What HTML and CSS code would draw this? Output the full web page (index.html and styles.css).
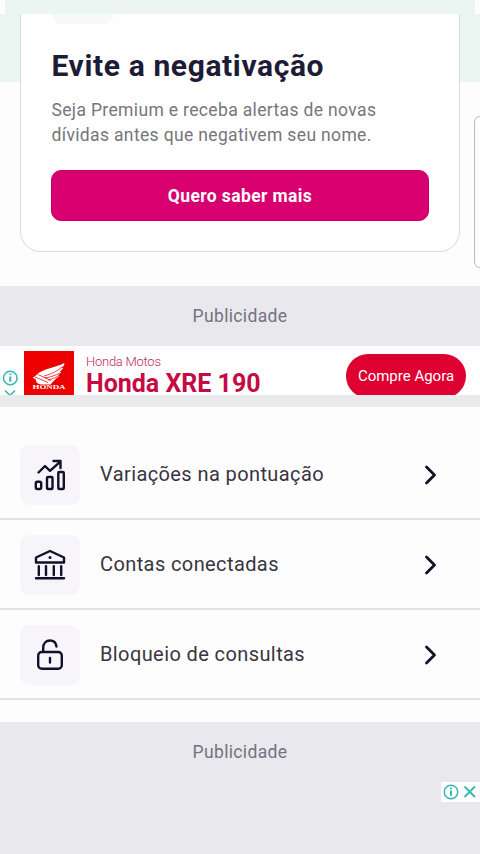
FILE: index.html
```html
<!DOCTYPE html>
<html lang="pt-BR">
<head>
<meta charset="utf-8">
<meta name="viewport" content="width=device-width, initial-scale=1">
<title>Serviços</title>
<link rel="stylesheet" href="styles.css">
</head>
<body>
<main class="screen">
  <section class="carousel">
    <span class="edge edge-left"></span>
    <span class="edge edge-right"></span>
    <article class="card">
      <span class="tag"></span>
      <h1 class="title">Evite a negativação</h1>
      <p class="copy">Seja Premium e receba alertas de novas<br>dívidas antes que negativem seu nome.</p>
      <button class="primary">Quero saber mais</button>
    </article>
    <article class="next-card"></article>
  </section>
  <div class="ad-label">Publicidade</div>
  <section class="banner">
    <div class="ad-options">
      <svg width="18" height="49" viewBox="0 0 18 49" fill="none" stroke="#35b8b4" stroke-width="1.5"><circle cx="10.3" cy="32" r="6.8"/><path d="M10.3 30.5v5.3M10.3 27.4v1.7" stroke-width="2"/><path d="M5 44.5l10 10M15 44.5l-10 10"/></svg>
    </div>
    <div class="logo">
      <svg width="51" height="44" viewBox="0 0 51 44"><path d="M40.5 12C33 16 18 18 13 23.500c-2 2-4 2.500-4 3.500 2 .5 3 1 3 3 1 3 4 3.500 8 3.500h7c1-3 4-4 5-6l3-2-1-1 3-3-1-1 3-3-1-1c2-2 2-2 2.500-4.500Z" fill="#fff"/><path d="M11 26l13 5.500M14 23.500l13 6M20 25c7-2 12-4 18-9M21 27c6-1 11-3 15-5M24 29c4-1 7-2 10-4" fill="none" stroke="#ed0000" stroke-width=".75"/><text x="8.500" y="38" textLength="33" lengthAdjust="spacingAndGlyphs">HONDA</text></svg>
    </div>
    <div class="ad-copy"><span class="brand">Honda Motos</span><strong class="model">Honda XRE 190</strong></div>
    <button class="buy">Compre Agora</button>
  </section>
  <nav class="menu">
    <a class="row">
      <span class="icon"><svg width="40" height="40" viewBox="0 0 40 40"><path d="M8.500 17.500l6.500-6.500 5 4.800 10-9M23.500 6H30.500V13"/><rect x="5.800" y="26.800" width="5.400" height="7.200" rx="1.500"/><rect x="17" y="22" width="5.500" height="12" rx="1"/><rect x="28.300" y="17" width="5.500" height="17" rx="1"/></svg></span>
      <span class="label">Variações na pontuação</span>
      <svg class="chevron" width="20" height="24" viewBox="0 0 20 24"><path d="M6.500 4l8 8-8 8"/></svg>
    </a>
    <a class="row">
      <span class="icon"><svg width="40" height="40" viewBox="0 0 40 40"><path d="M6 17.500v-5L20 6l14 6.500v5ZM8.800 21.200V30M16 21.200V30M23.800 21.200V30M31.200 21.200V30M6 33.300h28"/><circle class="dot" cx="20" cy="12.500" r="1.500"/></svg></span>
      <span class="label">Contas conectadas</span>
      <svg class="chevron" width="20" height="24" viewBox="0 0 20 24"><path d="M6.500 4l8 8-8 8"/></svg>
    </a>
    <a class="row">
      <span class="icon"><svg width="40" height="40" viewBox="0 0 40 40"><rect x="8.200" y="17" width="23.600" height="16.800" rx="3.500"/><path d="M13.200 16.500v-3.500C13.200 8.200 16 5.500 20 5.500c3.800 0 6 2.300 6.500 6M20 23v4.600"/></svg></span>
      <span class="label">Bloqueio de consultas</span>
      <svg class="chevron" width="20" height="24" viewBox="0 0 20 24"><path d="M6.500 4l8 8-8 8"/></svg>
    </a>
  </nav>
  <section class="bottom-ad">
    <div class="ad-label">Publicidade</div>
    <div class="ad-controls"><svg width="39" height="20" viewBox="0 0 39 20" fill="none" stroke="#35b8b4" stroke-width="1.5"><circle cx="10" cy="10" r="6.8"/><path d="M10 8.6v5.2M10 5.5v1.8" stroke-width="2"/><path d="M23.5 4.5l10.5 10.5M34 4.5L23.5 15" stroke-width="1.8"/></svg></div>
  </section>
</main>
</body>
</html>
```
FILE: styles.css
```css
* { box-sizing: border-box; }
body { margin: 0; font-family: Roboto, sans-serif; background: #fefdfe; }
.screen { width: 480px; height: 854px; overflow: hidden; background: #fefdfe; }
button { border: 0; padding: 0; font-family: inherit; color: #fff; }
.carousel { position: relative; display: flex; gap: 14px; height: 286px; padding: 14px 0 0 20px; overflow: hidden; background: linear-gradient(#ebf5f2 0 82px, #fefdfe 82px); }
.edge { position: absolute; top: 0; width: 5px; height: 14px; background: #fcfefd; }
.edge-left { left: 0; }
.edge-right { right: 0; }
.card { flex: none; width: 440px; height: 238px; padding: 0 31px 0 30.5px; border: 1px solid #dcd9df; border-top: 0; border-radius: 0 0 21px 21px; background: #fefefe; }
.tag { display: block; width: 62px; height: 10px; border-radius: 0 0 12px 12px; background: #f7f8f8; }
.title { margin: 22px 0 0; height: 40px; font-size: 30px; line-height: 40px; font-weight: 700; letter-spacing: .62px; color: #1d1b35; white-space: nowrap; }
.copy { margin: 12px 0 0; height: 50px; font-size: 17.5px; line-height: 25px; letter-spacing: .35px; color: #77757c; white-space: nowrap; }
.primary { display: block; width: 378px; height: 51px; margin-top: 22px; margin-left: -.5px; border-radius: 10px; border: 1px solid #c70067; background: #d8006f; font-size: 17.5px; font-weight: 700; letter-spacing: .38px; }
.next-card { flex: none; width: 100px; height: 152px; margin-top: 102px; border: 1.5px solid #bbb7be; border-radius: 6px; background: #fefefe; }
.ad-label { height: 60px; line-height: 60px; text-align: center; background: #e9e8ec; color: #747380; font-size: 17.5px; letter-spacing: .35px; }
.banner { display: flex; height: 61px; padding-right: 14px; border-bottom: 12px solid #e9eaec; background: #fefefe; overflow: hidden; }
.ad-options { width: 24px; }
.logo { width: 50px; height: 44px; margin-top: 5px; background: #ed0000; }
.logo text { font-family: "Liberation Serif", serif; font-size: 7px; font-weight: 700; fill: #fff; }
.ad-copy { display: flex; flex-direction: column; width: 260px; padding: 7px 0 0 12px; }
.brand { font-size: 13px; line-height: 17px; font-weight: 300; letter-spacing: -.25px; color: #bf295a; }
.model { font-size: 25px; line-height: 28px; color: #c60a43; }
.buy { flex: none; width: 120px; height: 44px; margin-left: 12px; margin-top: 8px; border-radius: 22px; background: #dd0030; font-size: 15px; }
.menu { height: 315px; padding-top: 23px; }
.row { display: flex; align-items: center; height: 90px; padding: 0 40px 0 20px; border-bottom: 2px solid #e2e0e5; }
.icon { display: flex; align-items: center; justify-content: center; width: 60px; height: 60px; margin-top: 2px; border-radius: 9px; background: #f7f5fa; }
.icon svg, .chevron { fill: none; stroke: #12102b; stroke-width: 2.4; stroke-linecap: round; stroke-linejoin: round; }
.icon .dot { fill: #12102b; stroke: none; }
.label { flex: 1; margin-left: 20px; font-size: 20px; letter-spacing: .4px; color: #38353e; white-space: nowrap; }
.row .chevron { margin-top: 2px; stroke-width: 2.8; }
.bottom-ad { height: 132px; background: #e9e8ec; }
.ad-controls { width: 39px; height: 20px; margin-left: 441px; background: #fefefe; }
.ad-controls svg { display: block; }
```
